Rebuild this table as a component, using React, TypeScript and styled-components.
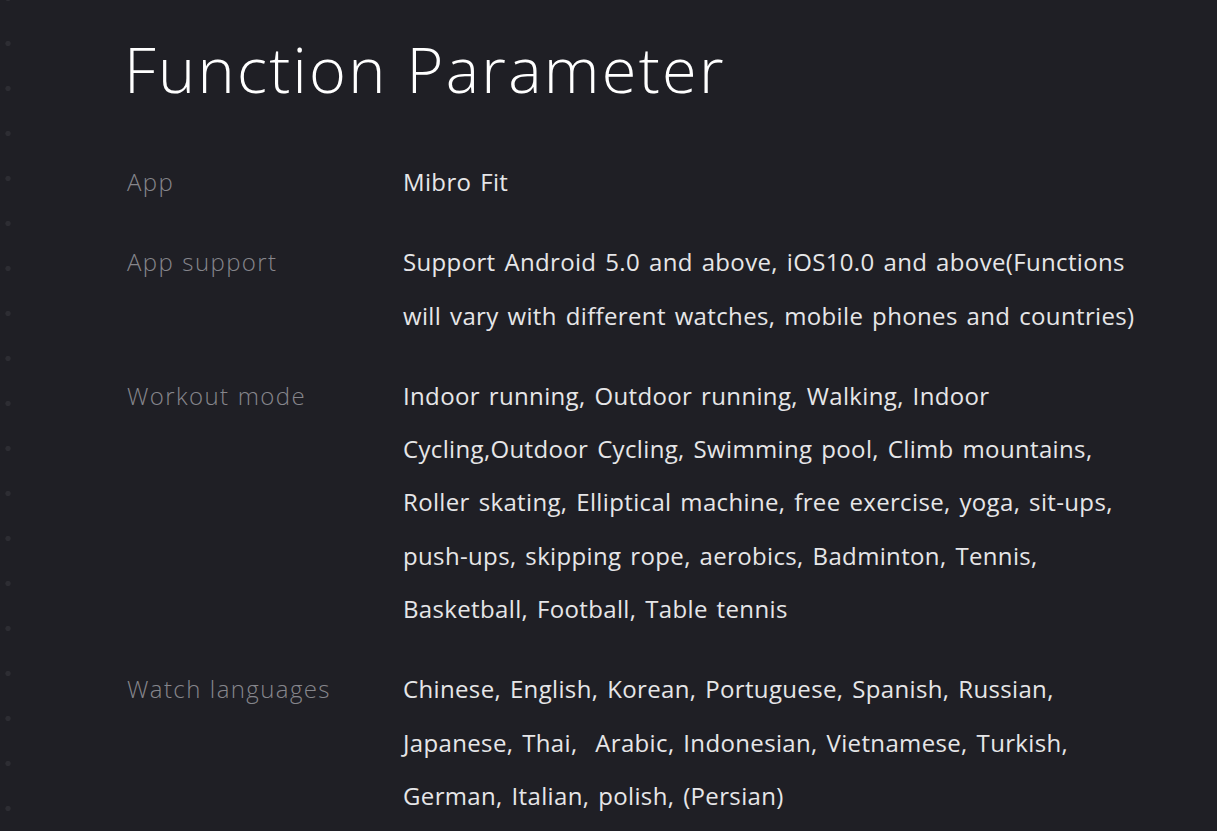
import React from "react";
import styled, { createGlobalStyle } from "styled-components";

const GlobalStyle = createGlobalStyle`
  html, body {
    margin: 0;
    padding: 0;
    background: #1f1f25;
  }
  * { box-sizing: border-box; }
`;

const Page = styled.main`
  min-height: 100vh;
  background-color: #1f1f25;
  background-image: radial-gradient(circle at 8px 22.5px, #2d2d33 0 2.2px, transparent 3px);
  background-size: 16px 45px;
  background-repeat: repeat-y;
  background-position: 0 21px;
  padding: 31px 0 0 121px;
  font-family: "Open Sans", "Noto Sans", sans-serif;
  color: #e8e8ea;
`;

const Title = styled.h1`
  margin: 0 0 48px 3px;
  font-size: 63px;
  line-height: 76px;
  font-weight: 300;
  color: #ffffff;
  letter-spacing: 2.3px;
`;

const Table = styled.div`
  display: grid;
  grid-template-columns: 275px 1fr;
  row-gap: 27px;
`;

const Label = styled.div`
  padding-left: 6px;
  font-size: 24px;
  line-height: 53.3px;
  font-weight: 300;
  color: #86868c;
  letter-spacing: 1.4px;
  word-spacing: 0.5px;
`;

const Value = styled.div`
  padding-left: 7px;
  font-size: 24px;
  line-height: 53.3px;
  font-weight: 400;
  color: #e6e6e8;
  letter-spacing: 0.35px;
  word-spacing: 2.3px;
`;

const Line = styled.span`
  display: block;
  white-space: pre;
`;

type Row = { label: string; lines: string[] };

const rows: Row[] = [
  { label: "App", lines: ["Mibro Fit"] },
  {
    label: "App support",
    lines: [
      "Support Android 5.0 and above, iOS10.0 and above(Functions",
      "will vary with different watches, mobile phones and countries)",
    ],
  },
  {
    label: "Workout mode",
    lines: [
      "Indoor running, Outdoor running, Walking, Indoor",
      "Cycling,Outdoor Cycling, Swimming pool, Climb mountains,",
      "Roller skating, Elliptical machine, free exercise, yoga, sit-ups,",
      "push-ups, skipping rope, aerobics, Badminton, Tennis,",
      "Basketball, Football, Table tennis",
    ],
  },
  {
    label: "Watch languages",
    lines: [
      "Chinese, English, Korean, Portuguese, Spanish, Russian,",
      "Japanese, Thai,  Arabic, Indonesian, Vietnamese, Turkish,",
      "German, Italian, polish, (Persian)",
    ],
  },
];

export default function App() {
  return (
    <>
      <GlobalStyle />
      <Page>
        <Title>Function Parameter</Title>
        <Table>
          {rows.map((r) => (
            <React.Fragment key={r.label}>
              <Label>{r.label}</Label>
              <Value>
                {r.lines.map((l, i) => (
                  <Line key={i}>{l}</Line>
                ))}
              </Value>
            </React.Fragment>
          ))}
        </Table>
      </Page>
    </>
  );
}
